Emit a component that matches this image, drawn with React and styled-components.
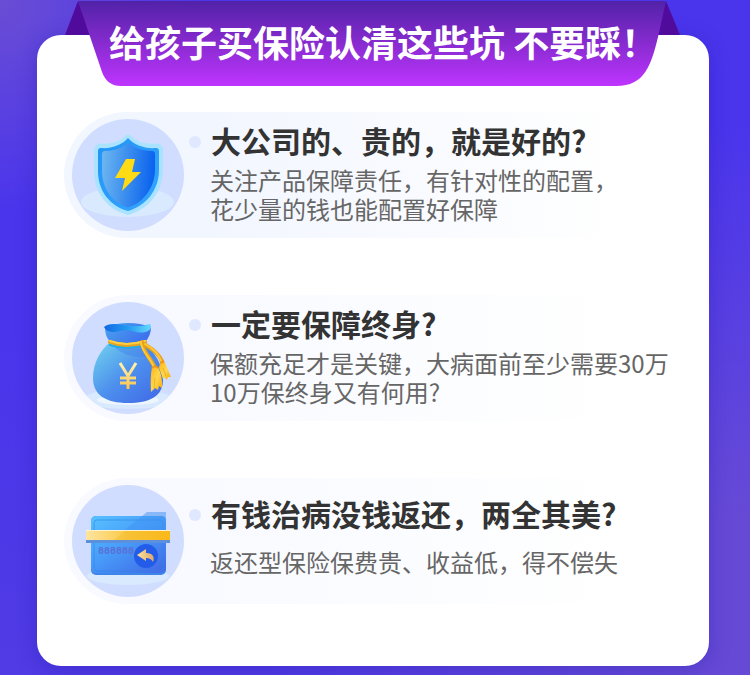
import React from "react";
import styled, { createGlobalStyle } from "styled-components";

const GlobalStyle = createGlobalStyle`
  * { box-sizing: border-box; }
  body {
    margin: 0;
    font-family: "Noto Sans CJK SC", "Noto Sans", sans-serif;
    color: #333;
    background: #4b35ea;
  }
`;

const Page = styled.div`
  min-height: 100vh;
  padding: 0 41px 9px 37px;
  background:
    radial-gradient(circle at 0 0, #6a4dd4 0, rgba(106, 77, 212, 0) 210px),
    radial-gradient(circle at 100% 90%, #664ad6 0, #664ad6 90px, rgba(102, 74, 214, 0) 480px),
    linear-gradient(180deg, #4a35ec 0%, #4a35ec 50%, #503be4 100%);
`;

const Card = styled.main`
  position: relative;
  margin-top: 35px;
  padding: 77px 26px 62px 27px;
  border-radius: 24px;
  background: #fff;
  box-shadow: 0 4px 20px rgba(36, 22, 170, 0.35);
`;

const Shell = styled.div`
  display: flow-root;
`;

const Banner = styled.header`
  position: absolute;
  top: -35px;
  left: 28px;
  right: 29px;
  height: 86px;
`;

const BannerShape = styled.svg`
  position: absolute;
  inset: 0;
  width: 100%;
  height: 100%;
`;

const Title = styled.h1`
  position: relative;
  margin: 0;
  padding: 14px 0 0 44px;
  font-size: 36px;
  line-height: 54px;
  font-weight: 700;
  color: #fff;
  white-space: nowrap;
`;

const List = styled.ul`
  display: grid;
  gap: 57px;
  margin: 0;
  padding: 0;
  list-style: none;
`;

const Item = styled.li`
  display: flex;
  min-height: 126px;
  padding: 7px 0 0 8px;
  border-radius: 63px 0 0 63px;
  background: linear-gradient(90deg, ${(p) => p.$tint} 0, ${(p) => p.$tint} 24%, #fff 90%);
`;

const Badge = styled.svg`
  flex: none;
  width: 112px;
  height: 112px;
`;

const Copy = styled.div`
  flex: 1;
  padding-top: ${(p) => (p.$airy ? 8 : 1)}px;
`;

const Heading = styled.h2`
  display: flex;
  align-items: flex-start;
  gap: 10px;
  margin: 0 0 ${(p) => (p.$airy ? 14 : 5)}px 5px;
  font-size: 30px;
  line-height: 40px;
  font-weight: 700;
  white-space: nowrap;

  &::before {
    content: "";
    width: 12px;
    height: 12px;
    margin-top: 16px;
    border-radius: 50%;
    background: #e0e8ff;
  }
`;

const Text = styled.p`
  margin: 0 0 0 26px;
  font-size: 24px;
  line-height: 29px;
  color: #666;
  white-space: pre-line;
`;

function ShieldIcon() {
  return (
    <Badge viewBox="0 0 112 112" aria-hidden="true">
      <defs>
        <linearGradient id="shieldFace" x1="0" y1="0.4" x2="1" y2="0.5">
          <stop offset="0" stopColor="#6bb5f0" />
          <stop offset="0.5" stopColor="#388bee" />
          <stop offset="1" stopColor="#0860ee" />
        </linearGradient>
        <linearGradient id="shieldRim" x1="0" y1="0" x2="1" y2="1">
          <stop offset="0" stopColor="#2194f5" />
          <stop offset="1" stopColor="#35a5ff" />
        </linearGradient>
      </defs>
      <circle cx="56" cy="56" r="56" fill="#d0ddff" />
      <ellipse cx="55.500" cy="83" rx="46.500" ry="15" fill="#d9eafe" />
      <path d="M56 17.500C50 24 40 28 29 26.500Q24 27 24 32V52C24 73 37 89 56 94C76 88 89 72 89 50V31Q89 26.500 84 26.500C73 28 63 24 56 17.500Z" fill="#a9e3ff" stroke="#a9e3ff" strokeWidth="4" strokeLinejoin="round" />
      <path d="M56 19C51 25 41 30 29 29Q26 29 26 32V52C26 72 38 87 56 92C74 87 87 71 87 51V32Q87 29 84 29C73 30 62 26 56 19Z" fill="url(#shieldRim)" />
      <path d="M56 24C50 29 42 32 33 32Q30 32 30 35V52C30 70 41 84 56 88.500C71 84 83 69 83 50V35Q83 32 80 32C71 32 62 29 56 24Z" fill="url(#shieldFace)" />
      <path d="M54 40H63L60 53H69L50 72L53 59H43Z" fill="#ffdb16" />
    </Badge>
  );
}

function MoneyBagIcon() {
  return (
    <Badge viewBox="0 0 112 112" aria-hidden="true">
      <defs>
        <linearGradient id="bagBody" x1="0" y1="0.2" x2="0.8" y2="1">
          <stop offset="0" stopColor="#6bc8ee" />
          <stop offset="0.5" stopColor="#4d90ed" />
          <stop offset="1" stopColor="#426ee8" />
        </linearGradient>
        <linearGradient id="bagNeck" x1="0" y1="0" x2="1" y2="0.5">
          <stop offset="0" stopColor="#4ba5ef" />
          <stop offset="1" stopColor="#3d71ed" />
        </linearGradient>
        <linearGradient id="bagMouth" x1="0" y1="0" x2="1" y2="0">
          <stop offset="0" stopColor="#1267e5" />
          <stop offset="0.5" stopColor="#219bef" />
          <stop offset="1" stopColor="#66d8ff" />
        </linearGradient>
        <linearGradient id="bagGold" x1="0" y1="61" x2="0" y2="87" gradientUnits="userSpaceOnUse">
          <stop offset="0" stopColor="#fff3b2" />
          <stop offset="1" stopColor="#fcc34c" />
        </linearGradient>
        <linearGradient id="bagTassel" x1="0" y1="0" x2="1" y2="1">
          <stop offset="0" stopColor="#ffb616" />
          <stop offset="0.5" stopColor="#ffd64c" />
          <stop offset="1" stopColor="#f4a700" />
        </linearGradient>
        <clipPath id="bagDisc"><circle cx="56" cy="56" r="56" /></clipPath>
      </defs>
      <circle cx="56" cy="56" r="56" fill="#d0ddff" />
      <g clipPath="url(#bagDisc)">
        <ellipse cx="56" cy="97" rx="44" ry="10" fill="#d9eafe" />
        <ellipse cx="56" cy="98" rx="31" ry="5" fill="#edf6ff" />
      </g>
      <path d="M38 40Q55 45 72 41C84 51 91 64 91 78C91 94 78 101 56 101C34 101 21 93 21 76C21 60 29 48 38 40Z" fill="url(#bagBody)" />
      <path d="M42 44Q57 48 74 43L83 54C69 57 49 54 42 44Z" fill="#3e79e7" opacity="0.35" />
      <path d="M33 25Q33 35 38 39Q55 44 73 40Q79 34 79 25Q57 17 33 25Z" fill="url(#bagNeck)" />
      <path d="M32 25Q37 20 51 23Q66 26 78 22Q81 26 76 29C65 34 59 25 48 29Q35 32 32 25Z" fill="url(#bagMouth)" />
      <path d="M38 43Q54 48 70 43" fill="none" stroke="#19aeea" strokeWidth="2" strokeLinecap="round" />
      <path d="M38 40Q54 46 73 40" fill="none" stroke="#e6a222" strokeWidth="4" strokeLinecap="round" />
      <path d="M38 39Q54 45 73 39" fill="none" stroke="#ffcf3f" strokeWidth="2" strokeLinecap="round" />
      <path d="M70 40C70 49 79 56 83 66M72 42C80 47 88 52 91 62" fill="none" stroke="#e5a21d" strokeWidth="4" strokeLinecap="round" />
      <path d="M69 40C69 49 78 55 82 65M73 42C80 46 87 51 90 62" fill="none" stroke="#ffc837" strokeWidth="2" strokeLinecap="round" />
      <path d="M88 61H93L99 75L96 75L95 78L92 75L91 77L87 66Z" fill="url(#bagTassel)" />
      <path d="M80 65H86Q91 75 90 86L87 84L86 88L83 86L79 90Q78 76 80 65Z" fill="url(#bagTassel)" />
      <path d="M83 76L82 86M91 66L94 74" stroke="#df9d16" opacity="0.6" fill="none" />
      <path d="M80 66Q83 63 86 66M88 61L92 59" stroke="#ef951e" strokeWidth="2" fill="none" />
      <path d="M48 61L56 74L64 61M56 74V87M48 76H64M48 81H64" fill="none" stroke="url(#bagGold)" strokeWidth="3" />
    </Badge>
  );
}

function CardIcon() {
  return (
    <Badge viewBox="0 0 112 112" aria-hidden="true">
      <defs>
        <linearGradient id="cardFace" x1="0" y1="0" x2="0.8" y2="1">
          <stop offset="0" stopColor="#58c2ff" />
          <stop offset="0.5" stopColor="#489dfa" />
          <stop offset="1" stopColor="#426fe8" />
        </linearGradient>
        <linearGradient id="cardBand" x1="0" y1="0" x2="1" y2="0">
          <stop offset="0" stopColor="#ffe4a0" />
          <stop offset="0.5" stopColor="#fac944" />
          <stop offset="1" stopColor="#ffbd20" />
        </linearGradient>
        <linearGradient id="cardArrow" x1="0" y1="0" x2="1" y2="0">
          <stop offset="0" stopColor="#ffe29a" />
          <stop offset="1" stopColor="#dba86c" />
        </linearGradient>
      </defs>
      <circle cx="56" cy="56" r="56" fill="#d0ddff" />
      <ellipse cx="56" cy="91" rx="41" ry="9" fill="#d9eafe" />
      <rect x="19" y="31" width="75" height="59" rx="5" fill="#3c86e9" />
      <rect x="19" y="31" width="75" height="57" rx="5" fill="url(#cardFace)" />
      <rect x="22" y="35" width="69" height="51" rx="3" fill="none" stroke="#2b84e5" opacity="0.6" />
      <path d="M42 54L75 27H94V54Z" fill="#3f93f2" opacity="0.5" />
      <rect x="14" y="47" width="84" height="11" fill="#5c90dc" />
      <rect x="14" y="45" width="84" height="10" fill="url(#cardBand)" />
      <path d="M42 55L54 45H98V55Z" fill="#e9a400" opacity="0.2" />
      <path d="M14 45.500H98" stroke="#fff2cc" />
      <text x="26" y="69" fontFamily="Liberation Mono, monospace" fontSize="10" fontWeight="700" fill="#5a6fd6">888888</text>
      <circle cx="74" cy="71" r="12" fill="#225ce9" />
      <path d="M65 70L74 64V68C81 68 83 72 81 77Q79 73 74 73V76Z" fill="url(#cardArrow)" />
    </Badge>
  );
}

const pitfalls = [
  {
    icon: ShieldIcon,
    tint: "#f2f6ff",
    heading: "大公司的、贵的，就是好的?",
    body: "关注产品保障责任，有针对性的配置，\n花少量的钱也能配置好保障",
  },
  {
    icon: MoneyBagIcon,
    tint: "#f8faff",
    heading: "一定要保障终身?",
    body: "保额充足才是关键，大病面前至少需要30万\n10万保终身又有何用?",
  },
  {
    icon: CardIcon,
    tint: "#f8faff",
    airy: true,
    heading: "有钱治病没钱返还，两全其美?",
    body: "返还型保险保费贵、收益低，得不偿失",
  },
];

export default function App() {
  return (
    <Page>
      <GlobalStyle />
      <Shell>
        <Card>
          <Banner>
            <BannerShape viewBox="0 0 615 86" preserveAspectRatio="none" aria-hidden="true">
              <defs>
                <linearGradient id="ribbon" x1="0" y1="0" x2="0" y2="1">
                  <stop offset="0" stopColor="#5122a8" />
                  <stop offset="0.5" stopColor="#882bd0" />
                  <stop offset="1" stopColor="#be34ff" />
                </linearGradient>
              </defs>
              <path d="M13 1L0 35H26ZM601 1L615 35H590Z" fill="#500b9d" />
              <path d="M13 1H601L593 37C586 65 580 86 551 86H56Q42 86 37 72Z" fill="url(#ribbon)" />
            </BannerShape>
            <Title>给孩子买保险认清这些坑 不要踩！</Title>
          </Banner>
          <List>
            {pitfalls.map(({ icon: Icon, tint, airy, heading, body }) => (
              <Item key={heading} $tint={tint}>
                <Icon />
                <Copy $airy={airy}>
                  <Heading $airy={airy}>{heading}</Heading>
                  <Text>{body}</Text>
                </Copy>
              </Item>
            ))}
          </List>
        </Card>
      </Shell>
    </Page>
  );
}
